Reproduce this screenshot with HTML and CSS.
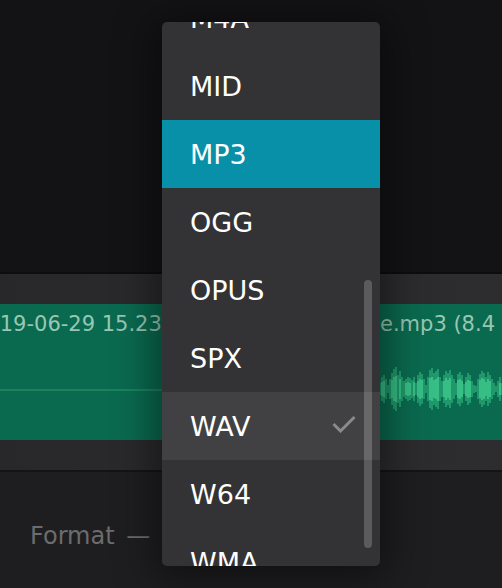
FILE: index.html
```html
<!DOCTYPE html>
<html>
<head>
<meta charset="utf-8">
<link rel="stylesheet" href="styles.css">
</head>
<body>
<div class="top"></div>
<div class="track">
  <div class="wave">
    <svg class="wave-svg" width="502" height="136" viewBox="0 0 502 136">
      <line x1="0" y1="86" x2="380" y2="86" stroke="#2b9c6d" stroke-width="1"/>
      <path class="outer" d="M380 79V91M382 73V97M384 71V99M386 75V95M388 81V89M390 75V95M392 69V101M394 65V105M396 63V107M398 71V99M400 67V103M402 73V97M404 77V93M406 75V95M408 73V97M410 74V96M412 76V94M414 73V97M416 79V91M418 71V99M420 68V102M422 70V100M424 75V95M426 81V89M428 73V97M430 66V104M432 64V106M434 69V101M436 67V103M438 65V105M440 73V97M442 77V93M444 71V99M446 67V103M448 69V101M450 66V104M452 71V99M454 75V95M456 79V91M458 70V100M460 68V102M462 71V99M464 80V90M466 73V97M468 69V101M470 71V99M472 77V93M474 81V89M476 82V88M478 75V95M480 70V100M482 67V103M484 69V101M486 73V97M488 68V102M490 71V99M492 75V95M494 79V91M496 82V88M498 77V93M500 73V97M502 79V91"/>
      <path class="inner" d="M382 78V92M384 77V93M392 76V94M394 73V97M396 72V98M400 75V95M406 79V91M408 78V92M410 79V91M414 78V92M418 77V93M420 75V95M422 76V94M430 74V96M432 73V97M434 76V94M436 75V95M438 73V97M444 77V93M446 74V96M448 76V94M450 74V96M458 76V94M460 75V95M462 77V93M466 78V92M468 76V94M470 77V93M480 76V94M482 74V96M484 75V95M486 78V92M488 75V95M490 77V93M500 79V91"/>
    </svg>
    <div class="names">
      <div class="name-left"><span>2019-06-29 15.23.13 Recording</span></div>
      <div class="name-right">e.mp3 (8.4 MB)</div>
    </div>
  </div>
</div>
<div class="bottom">Format —</div>

<div class="menu">
  <div class="list">
    <div class="item">M4A</div>
    <div class="item">MID</div>
    <div class="item active">MP3</div>
    <div class="item">OGG</div>
    <div class="item">OPUS</div>
    <div class="item">SPX</div>
    <div class="item hover">WAV
      <svg class="check" width="24" height="18" viewBox="0 0 24 18"><polyline points="1.5,9 8.5,16 22.5,2" fill="none" stroke="#8a8a8c" stroke-width="3"/></svg>
    </div>
    <div class="item">W64</div>
    <div class="item">WMA</div>
  </div>
  <div class="scrollbar"></div>
</div>
</body>
</html>
```

FILE: styles.css
```css
html, body {
  margin: 0;
  padding: 0;
  background: #131316;
  overflow: hidden;
}
body {
  width: 502px;
  height: 588px;
  position: relative;
  font-family: "DejaVu Sans", "Noto Sans", sans-serif;
}
.top {
  height: 272px;
  background: #131316;
  border-bottom: 2px solid #0d0d0f;
}
.track {
  padding: 30px 0;
  background: linear-gradient(90deg, #28282a, #2d2d2f);
  border-bottom: 2px solid #141416;
}
.wave {
  height: 136px;
  background: #0a6a4f;
  display: grid;
}
.wave > * {
  grid-area: 1 / 1;
}
.wave-svg {
  display: block;
}
.outer {
  stroke: #28a875;
  stroke-width: 1.5;
  fill: none;
}
.inner {
  stroke: #3fcb8e;
  stroke-width: 1.5;
  fill: none;
}
.names {
  display: flex;
  padding-top: 8px;
  font-size: 21px;
  line-height: 25px;
  height: 25px;
  color: #98c7b3;
  white-space: nowrap;
  overflow: hidden;
}
.name-left {
  flex: 0 0 162px;
  overflow: hidden;
}
.name-left span {
  display: block;
  margin-left: -27px;
}
.name-right {
  margin-left: 218px;
}
.bottom {
  height: 116px;
  box-sizing: border-box;
  padding: 50px 0 0 30px;
  background: #1e1e20;
  font-size: 24px;
  line-height: 28px;
  color: #6c6c6e;
  word-spacing: 4px;
}
.menu {
  position: absolute;
  left: 162px;
  top: 22px;
  width: 218px;
  height: 544px;
  background: #333335;
  border-radius: 5px;
  overflow: hidden;
  box-shadow: 0 6px 40px 8px rgba(0, 0, 0, 0.45);
}
.list {
  margin-top: -38px;
}
.item {
  height: 68px;
  display: flex;
  align-items: center;
  justify-content: space-between;
  padding: 0 24px 0 28px;
  font-size: 27px;
  color: #ffffff;
}
.item.active {
  background: #0790a8;
}
.item.hover {
  background: #414143;
}
.check {
  margin-bottom: 4px;
}
.scrollbar {
  position: absolute;
  right: 8px;
  top: 258px;
  width: 8px;
  height: 268px;
  border-radius: 4px;
  background: rgba(255, 255, 255, 0.2);
}
```
